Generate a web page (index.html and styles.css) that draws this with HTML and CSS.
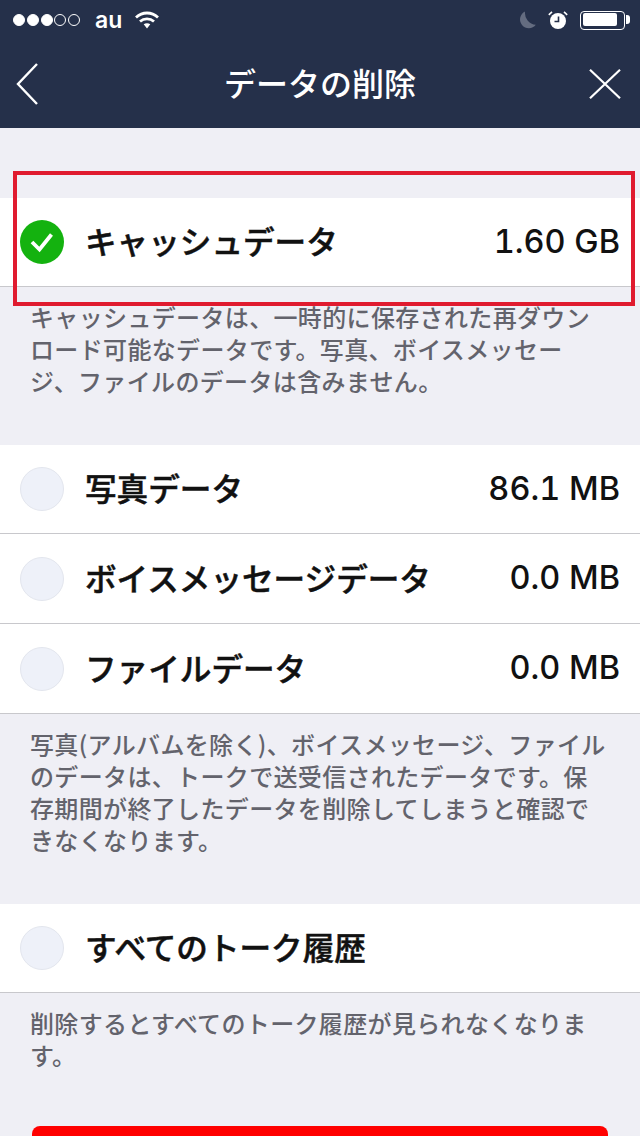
FILE: index.html
```html
<!DOCTYPE html>
<html lang="ja">
<head>
<meta charset="utf-8">
<title>データの削除</title>
<link rel="stylesheet" href="styles.css">
</head>
<body>
<div class="phone">
  <header class="header">
    <div class="status">
      <div class="status-left">
        <span class="signal"><i class="on"></i><i class="on"></i><i class="on"></i><i></i><i></i></span>
        <span class="carrier">au</span>
        <svg class="wifi" width="24" height="18" viewBox="0 0 24 18"><path d="M1 6.500C7.500 .5 16.500 .5 23 6.500" class="w"/><path d="M5 10.500C9 7 15 7 19 10.500" class="w"/><path d="M8.700 13.300L12 17.500l3.300-4.200c-1.900-1.500-4.700-1.500-6.600 0z" fill="#fff"/></svg>
      </div>
      <div class="status-right">
        <svg width="18" height="18" viewBox="0 0 18 18"><path d="M7 .5A8.800 8.800 0 1 0 17.800 13.800 12 12 0 0 1 7 .5z" fill="#646c80"/></svg>
        <svg width="20" height="18" viewBox="0 0 20 18"><circle cx="10" cy="10" r="8" fill="#fff"/><path d="M10.500 5.500v5H6.500" fill="none" stroke="#25304a" stroke-width="1.600"/><path d="M.8 3.800L4 .8M19.200 3.800L16 .8" stroke="#fff" stroke-width="1.600"/></svg>
        <span class="battery"><span class="battery-fill"></span></span>
      </div>
    </div>
    <div class="nav">
      <svg class="nav-icon back" width="22" height="42" viewBox="0 0 22 42"><path d="M21 1L2 21l19 20" fill="none" stroke="#fff" stroke-width="2.400"/></svg>
      <h1 class="title">データの削除</h1>
      <svg class="nav-icon close" width="32" height="30" viewBox="0 0 32 30"><path d="M1 .8l30 28.400M31 .8L1 29.200" fill="none" stroke="#fff" stroke-width="2.200"/></svg>
    </div>
  </header>

  <main class="content">
    <section class="group first">
      <div class="row">
        <span class="radio checked"><svg width="44" height="44" viewBox="0 0 44 44"><path d="M12 22l7.500 7.500L31.500 14.500" fill="none" stroke="#fff" stroke-width="3.800"/></svg></span>
        <span class="label">キャッシュデータ</span>
        <span class="value">1.60 GB</span>
      </div>
    </section>
    <p class="note note-a">キャッシュデータは、一時的に保存された再ダウンロード可能なデータです。写真、ボイスメッセージ、ファイルのデータは含みません。</p>

    <section class="group">
      <div class="row"><span class="radio"></span><span class="label">写真データ</span><span class="value">86.1 MB</span></div>
      <div class="row tall"><span class="radio"></span><span class="label">ボイスメッセージデータ</span><span class="value">0.0 MB</span></div>
      <div class="row tall"><span class="radio"></span><span class="label">ファイルデータ</span><span class="value">0.0 MB</span></div>
    </section>
    <p class="note note-b">写真(アルバムを除く)、ボイスメッセージ、ファイルのデータは、トークで送受信されたデータです。保存期間が終了したデータを削除してしまうと確認できなくなります。</p>

    <section class="group">
      <div class="row"><span class="radio"></span><span class="label">すべてのトーク履歴</span></div>
    </section>
    <p class="note note-c">削除するとすべてのトーク履歴が見られなくなります。</p>

    <div class="danger"></div>
  </main>

  <div class="highlight"></div>
</div>
</body>
</html>
```
FILE: styles.css
```css
* { box-sizing: border-box; }
html, body { margin: 0; padding: 0; }
body { font-family: "Noto Sans CJK JP", "Noto Sans", sans-serif; background: #efeff5; }
.phone { position: relative; width: 640px; height: 1136px; overflow: hidden; background: #efeff5; }

.header { height: 128px; background: #25304a; color: #fff; }
.status { height: 40px; display: flex; justify-content: space-between; align-items: center; padding: 0 11px 0 13px; }
.status-left, .status-right { display: flex; align-items: center; }
.signal { display: flex; gap: 1.750px; }
.signal i { width: 12px; height: 12px; border-radius: 50%; border: 1px solid #fff; }
.signal i.on { background: #fff; }
.carrier { font: 600 23px/40px "Inter", "Liberation Sans", sans-serif; margin-left: 15px; }
.wifi { margin-left: 13px; }
.w { fill: none; stroke: #fff; stroke-width: 2.800; }
.status-right { gap: 12px; }
.battery { position: relative; width: 45px; height: 19px; border: 1.500px solid #fff; border-radius: 4px; padding: 1.500px; margin-right: 4px; }
.battery::after { content: ""; position: absolute; right: -5.500px; top: 3.500px; width: 3.500px; height: 9px; background: #fff; border-radius: 0 3px 3px 0; }
.battery-fill { display: block; width: 34px; height: 13px; background: #fff; border-radius: 2px; }

.nav { height: 88px; display: grid; grid-template-columns: 1fr auto 1fr; align-items: center; padding: 0 19px; }
.nav-icon { display: block; }
.back { margin-left: -3px; }
.close { justify-self: end; }
.title { margin: 0 0 4px; font-size: 32px; font-weight: 500; line-height: 84px; }

.group { background: #fff; }
.group.first { margin-top: 70px; }
.row { height: 89px; padding: 0 20px; display: flex; align-items: center; border-bottom: 1px solid #c8c8cc; }
.row.tall { height: 90px; }
.radio { flex: none; width: 44px; height: 44px; border-radius: 50%; background: #eef1f9; border: 1px solid #e3e6ee; }
.radio.checked { background: #14b20f; border: 0; }
.radio svg { display: block; }
.label { flex: 1; margin-left: 21px; padding-bottom: 4px; font-size: 31.600px; font-weight: 500; -webkit-text-stroke: .5px #111; color: #111; white-space: nowrap; }
.value { padding-bottom: 2px; font-size: 32.500px; font-weight: 500; font-variant-numeric: tabular-nums; color: #111; white-space: nowrap; font-family: "Inter", "Liberation Sans", sans-serif; }

.note { margin: 0; padding: 14px 30px 0; font-size: 24px; font-weight: 500; line-height: 32px; letter-spacing: .35px; color: #63636c; }
.note-a { height: 158px; }
.note-b { height: 190px; }
.note-c { height: 133px; }

.danger { height: 60px; margin: 0 32px; background: #ff0000; border-radius: 8px; }

.highlight { position: absolute; left: 13px; top: 171px; width: 622px; height: 135px; border: 4.500px solid #e01b2f; }
```
